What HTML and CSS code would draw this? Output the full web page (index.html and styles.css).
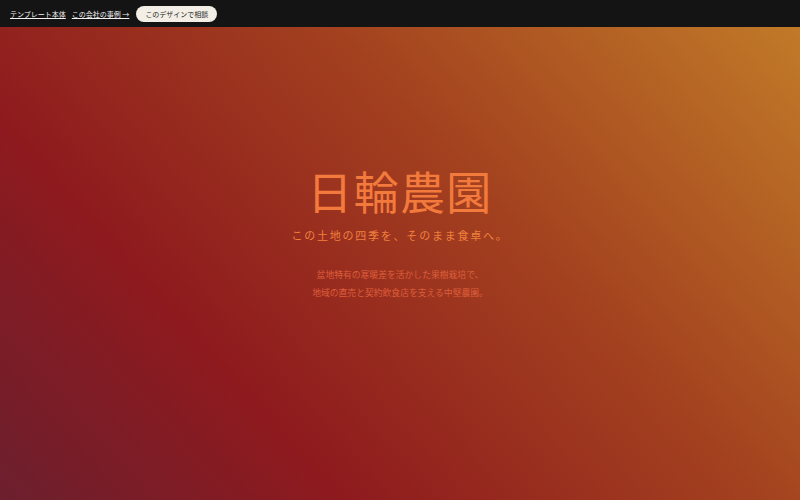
FILE: index.html
```html
<!DOCTYPE html>
<html lang="ja">
<head>
<meta charset="utf-8">
<title>日輪農園</title>
<link rel="stylesheet" href="styles.css">
</head>
<body>
<header class="topbar">
  <a class="toplink" href="#">テンプレート本体</a>
  <a class="toplink" href="#">この会社の事例 →</a>
  <a class="cta" href="#">このデザインで相談</a>
</header>
<main class="hero">
  <h1 class="title">日輪農園</h1>
  <p class="tagline">この土地の四季を、そのまま食卓へ。</p>
  <p class="lead">盆地特有の寒暖差を活かした果樹栽培で、<br>地域の直売と契約飲食店を支える中堅農園。</p>
</main>
</body>
</html>
```

FILE: styles.css
```css
* { box-sizing: border-box; }
html, body { margin: 0; padding: 0; height: 100%; }
body {
  font-family: "Noto Sans CJK JP", "Noto Sans", sans-serif;
  display: flex;
  flex-direction: column;
  background: #141414;
}
.topbar {
  height: 27px;
  flex: 0 0 27px;
  background: #141414;
  display: flex;
  align-items: center;
  padding: 0 10px;
  gap: 6px;
}
.toplink {
  color: #f2f2f2;
  font-size: 7px;
  text-decoration: underline;
  text-underline-offset: 1px;
}
.cta {
  margin-left: 1px;
  background: #f3efe6;
  color: #222;
  font-size: 7px;
  text-decoration: none;
  border-radius: 9px;
  height: 16px;
  padding: 0 9px;
  display: flex;
  align-items: center;
}
.hero {
  flex: 1;
  background: linear-gradient(48deg, #6c1f2e 0%, #8e1a1e 28%, #a3411f 62%, #c17a28 100%);
  display: flex;
  flex-direction: column;
  align-items: center;
  padding-top: 136px;
  text-align: center;
}
.title {
  margin: 0;
  font-weight: 400;
  font-size: 45px;
  line-height: 56px;
  letter-spacing: 0.03em;
  color: #f27a3c;
}
.tagline {
  margin: 7px 0 0;
  font-size: 11px;
  line-height: 18px;
  letter-spacing: 0.16em;
  color: #f0803e;
}
.lead {
  margin: 22px 0 0;
  font-size: 8.8px;
  line-height: 18px;
  color: #dd5e3a;
}
```
